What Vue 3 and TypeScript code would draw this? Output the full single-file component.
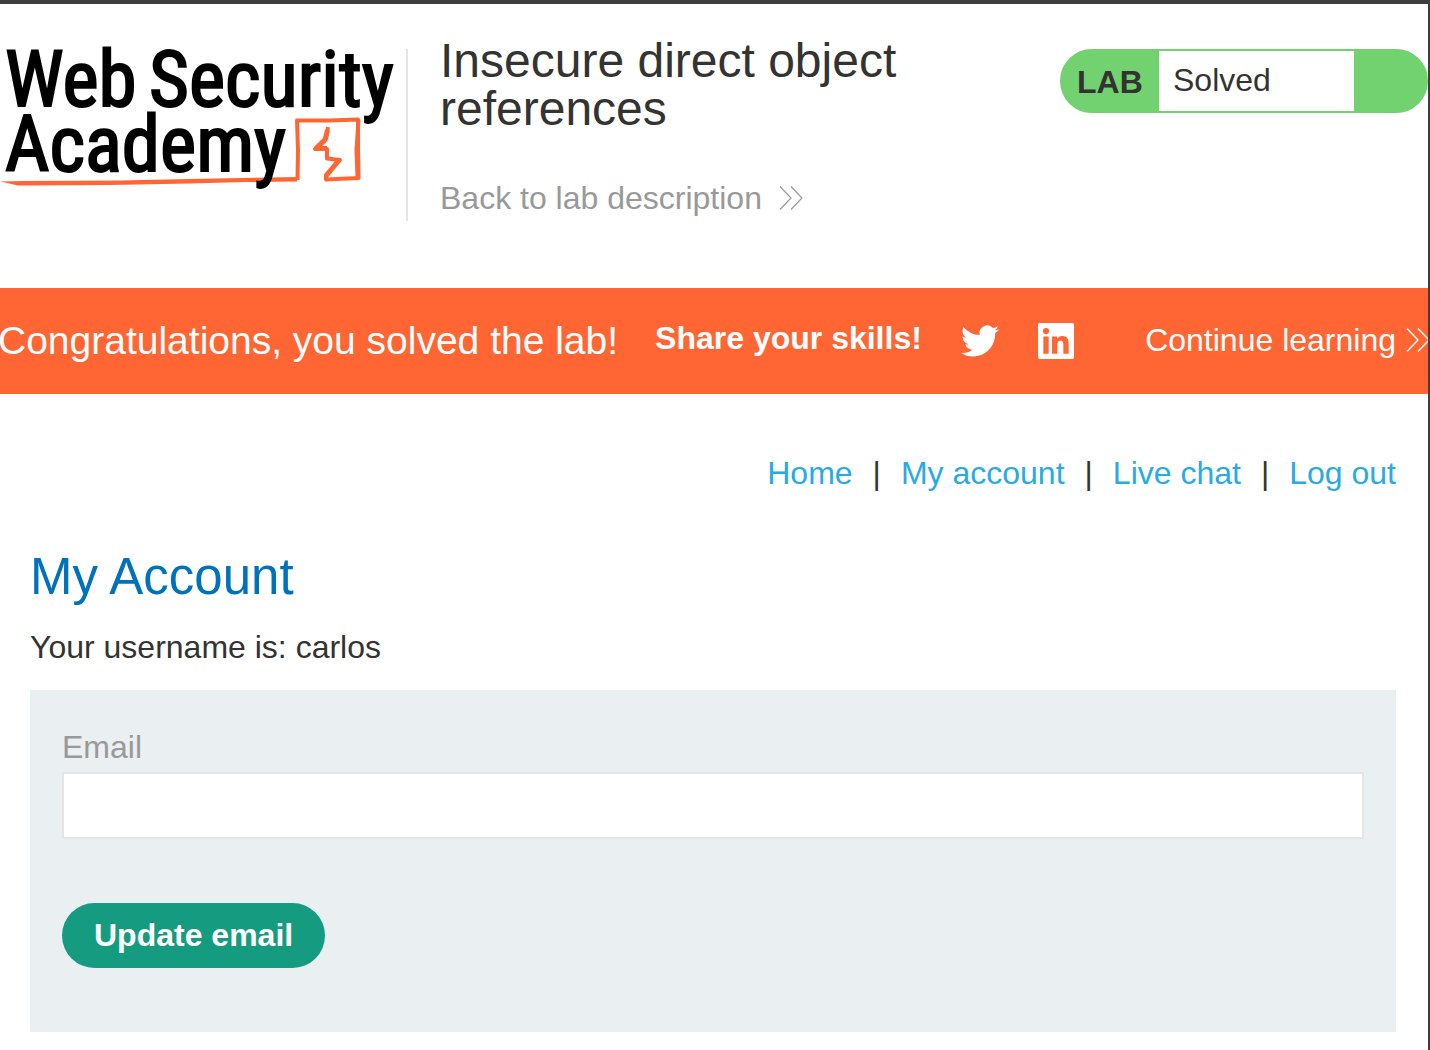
<script setup lang="ts">
import { ref } from 'vue'

interface NavLink {
  label: string
  href: string
}

const links: NavLink[] = [
  { label: 'Home', href: '#home' },
  { label: 'My account', href: '#my-account' },
  { label: 'Live chat', href: '#chat' },
  { label: 'Log out', href: '#logout' },
]

const username = 'carlos'
const email = ref('')
</script>

<template>
  <div class="page">
    <header class="lab-header">
      <a class="logo" href="#academy" aria-label="Web Security Academy">
        <svg width="400" height="144" viewBox="0 49 400 144">
          <g fill="none" stroke="#ff6633" stroke-width="4" stroke-linejoin="round">
            <path d="M0 181.500L24 181L120 180.500L190 179L297 177V181.500L245 182L190 183.500L110 185L18 185.500Z" fill="#ff6633" stroke="none" />
            <path d="M297.500 180L298 150L297 120.500L330 120.500L358 119.500L358 150L358.500 178L326 179.500L326 175L340 160L327 158.500L327 149L315 149L326 138L328 127" />
            <path d="M358.500 120L356.500 150L357.500 177" />
            <path d="M327.500 130L325 140L316 148.500L327 148.500M326 176L339 160" stroke-width="5" />
          </g>
          <text class="logo-text" x="5" y="106">Web</text>
          <text class="logo-text" x="149" y="106">Security</text>
          <text class="logo-text" x="5" y="171">Academy</text>
        </svg>
      </a>
      <div class="title">
        <h1>Insecure direct object references</h1>
        <a class="back" href="#lab-description">
          Back to lab description
          <svg width="24" height="24" viewBox="0 0 24 24" fill="none" stroke="currentColor" stroke-width="1.2">
            <path d="M1 0.500L12 12L1 23.500M12 0.500L23 12L12 23.500" />
          </svg>
        </a>
      </div>
      <div class="status">
        <span class="status-tag">LAB</span>
        <span class="status-value">Solved</span>
      </div>
    </header>

    <section class="banner">
      <p class="congrats">Congratulations, you solved the lab!</p>
      <div class="share">
        <strong>Share your skills!</strong>
        <a href="#twitter" aria-label="Twitter">
          <svg width="38" height="38" viewBox="0 0 24 24" fill="currentColor">
            <path d="M23.953 4.570a10 10 0 01-2.825.775 4.958 4.958 0 002.163-2.723c-.951.555-2.005.959-3.127 1.184a4.920 4.920 0 00-8.384 4.482C7.690 8.095 4.067 6.130 1.640 3.162a4.822 4.822 0 00-.666 2.475c0 1.710.870 3.213 2.188 4.096a4.904 4.904 0 01-2.228-.616v.060a4.923 4.923 0 003.946 4.827 4.996 4.996 0 01-2.212.085 4.936 4.936 0 004.604 3.417 9.867 9.867 0 01-6.102 2.105c-.390 0-.779-.023-1.170-.067a13.995 13.995 0 007.557 2.209c9.053 0 13.998-7.496 13.998-13.985 0-.210 0-.420-.015-.630A9.935 9.935 0 0024 4.590z" />
          </svg>
        </a>
        <a href="#linkedin" aria-label="LinkedIn">
          <svg width="36" height="36" viewBox="0 0 24 24" fill="currentColor">
            <path d="M20.447 20.452h-3.554v-5.569c0-1.328-.027-3.037-1.852-3.037-1.853 0-2.136 1.445-2.136 2.939v5.667H9.351V9h3.414v1.561h.046c.477-.900 1.637-1.850 3.370-1.850 3.601 0 4.267 2.370 4.267 5.455v6.286zM5.337 7.433a2.062 2.062 0 01-2.063-2.065 2.064 2.064 0 112.063 2.065zm1.782 13.019H3.555V9h3.564v11.452zM22.800 0H1.200C.500 0 0 .500 0 1.200v21.600C0 23.500.500 24 1.200 24h21.600c.700 0 1.200-.500 1.200-1.200V1.200C24 .500 23.500 0 22.800 0z" />
          </svg>
        </a>
      </div>
      <a class="continue" href="#next">
        Continue learning
        <svg width="24" height="24" viewBox="0 0 24 24" fill="none" stroke="currentColor" stroke-width="1.400">
          <path d="M1 0.500L12 12L1 23.500M12 0.500L23 12L12 23.500" />
        </svg>
      </a>
    </section>

    <main>
      <nav>
        <template v-for="(link, i) in links" :key="link.label">
          <span v-if="i > 0">|</span>
          <a :href="link.href">{{ link.label }}</a>
        </template>
      </nav>
      <h2>My Account</h2>
      <p class="user">Your username is: {{ username }}</p>
      <form @submit.prevent>
        <label for="email">Email</label>
        <input id="email" v-model="email" type="email" />
        <button type="submit">Update email</button>
      </form>
    </main>
  </div>
</template>

<style>
body {
  margin: 0;
}
</style>

<style scoped>
.page {
  box-sizing: border-box;
  min-height: 100vh;
  border-top: 4px solid #3f3f40;
  border-right: 2px solid #3f3f40;
  background: #fff;
  color: #333332;
  font-family: "Liberation Sans", Arial, sans-serif;
  font-size: 32px;
  line-height: 32px;
  overflow: hidden;
}

a {
  text-decoration: none;
}

svg {
  display: block;
}

.lab-header {
  display: flex;
  align-items: flex-start;
  padding-top: 33px;
  padding-bottom: 67px;
}

.logo {
  box-sizing: border-box;
  flex: none;
  width: 408px;
  height: 172px;
  margin-top: 12px;
  border-right: 2px solid #e5e5e5;
}

.logo svg {
  overflow: visible;
}

.logo-text {
  fill: #000;
  stroke: #000;
  stroke-width: 2px;
  font-family: "Roboto Condensed", "Roboto", sans-serif;
  font-size: 77px;
}

.title {
  flex: 0 1 512px;
  margin-left: 32px;
}

h1 {
  margin: 0 0 49px;
  font-size: 48px;
  line-height: 48px;
  font-weight: 400;
}

.back {
  display: flex;
  align-items: center;
  gap: 17px;
  color: #999;
}

.status {
  box-sizing: border-box;
  display: flex;
  flex: none;
  width: 368px;
  height: 64px;
  margin-top: 12px;
  margin-left: auto;
  border: 2px solid #72d26f;
  border-radius: 32px;
  background: #72d26f;
  line-height: 60px;
}

.status-tag {
  width: 97px;
  padding-left: 15px;
  box-sizing: border-box;
  font-weight: 700;
  line-height: 62px;
}

.status-value {
  box-sizing: border-box;
  width: 195px;
  padding-left: 14px;
  background: #fff;
  line-height: 58px;
}

.banner {
  display: flex;
  align-items: center;
  height: 106px;
  background: #ff6633;
  color: #fff;
  white-space: nowrap;
}

.banner a {
  color: #fff;
}

.congrats {
  margin: 0 0 0 -2px;
  font-size: 39px;
}

.share {
  display: flex;
  align-items: center;
  gap: 39px;
  margin-left: 37px;
}

.share strong {
  padding-bottom: 6px;
}

.continue {
  display: flex;
  align-items: center;
  gap: 10px;
  margin-right: -2px;
  margin-left: auto;
  padding-bottom: 2px;
}

main {
  padding: 63px 32px 18px 30px;
}

nav {
  display: flex;
  justify-content: flex-end;
  gap: 20px;
}

nav a {
  color: #29abe2;
}

h2 {
  margin: 62px 0 29px;
  color: #0071bc;
  font-size: 51px;
  line-height: 51px;
  font-weight: 400;
}

.user {
  margin: 0 0 27px;
}

form {
  padding: 41px 32px 64px;
  background: #eaeff2;
}

label {
  display: block;
  margin-bottom: 9px;
  color: #999;
}

input {
  box-sizing: border-box;
  display: block;
  width: 100%;
  height: 67px;
  margin-bottom: 64px;
  padding: 0 16px;
  border: 2px solid #e5e5e5;
  background: #fff;
  color: inherit;
  font: inherit;
}

button {
  display: block;
  height: 65px;
  padding: 0 32px 2px;
  border: 0;
  border-radius: 33px;
  background: #159c80;
  color: #fff;
  font: inherit;
  font-weight: 700;
}
</style>
